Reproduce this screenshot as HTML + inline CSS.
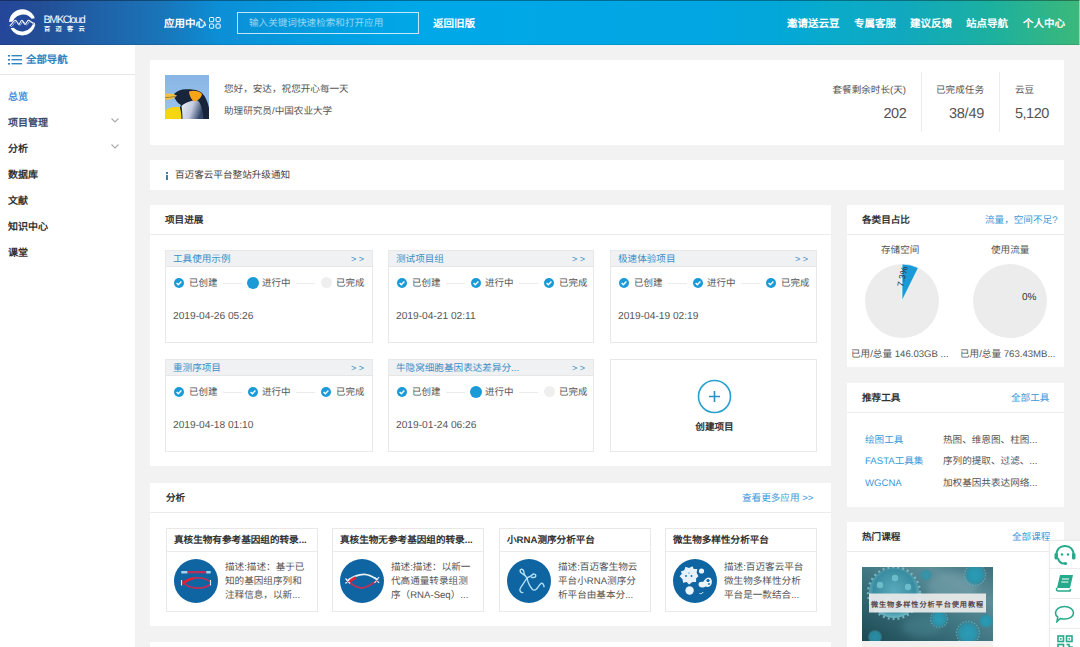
<!DOCTYPE html>
<html lang="zh-CN">
<head>
<meta charset="utf-8">
<style>
*{margin:0;padding:0;box-sizing:border-box}
html,body{width:1080px;height:647px;overflow:hidden;background:#f2f2f2;font-family:"Liberation Sans",sans-serif;color:#333;text-rendering:geometricPrecision}
.a{position:absolute}
div.a{padding-top:1px}
#hdr{left:0;top:0;width:1080px;height:45px;background:linear-gradient(90deg,#25469a 0%,#234e95 3.7%,#1f62a8 9.3%,#1a74b8 14.8%,#0c8fd6 20.4%,#02a0e2 31.5%,#00a8e8 39%,#02a6e2 65%,#03a7d8 72%,#0aabc8 78%,#10a8c0 83.3%,#1cb0a0 91.7%,#3cb87a 100%)}
#hdr .topline{left:0;top:0;width:1080px;height:1px;background:rgba(0,0,0,.35)}
.hn{color:#fff;font-weight:bold;font-size:10.5px;top:17px;line-height:13px;white-space:nowrap}
#side{left:0;top:45px;width:135px;height:602px;background:#fff}
.si{left:8px;font-size:10px;font-weight:bold;line-height:12px;color:#333;white-space:nowrap}
.card{background:#fff}
.t11{font-size:9.6px;line-height:12px;white-space:nowrap}
.pc{background:#fff;border:1px solid #e8e8e8}
.pch{left:0;top:0;height:16px;background:#f0f1f3;border-bottom:1px solid #e6e6e6}
.pct{left:7px;top:2px;font-size:9.6px;line-height:12px;color:#3a8fc8;white-space:nowrap}
.pcm{top:1px;font-size:9px;line-height:12px;color:#3a8fc8;white-space:nowrap}
.pst{top:25.5px;font-size:9.5px;line-height:12px;color:#555;white-space:nowrap}
.pln{top:31.5px;width:19px;height:1px;background:#ebebeb}
.pdt{left:7px;top:59px;font-size:10.2px;line-height:12px;color:#555;white-space:nowrap}
.ac{background:#fff;border:1px solid #e8e8e8;width:152px;height:84px}
.act{left:7px;top:5px;font-size:9.6px;font-weight:bold;line-height:12px;color:#333;white-space:nowrap}
.ach{left:0;top:22px;width:150px;height:1px;background:#ececec}
.aci{left:8px;top:30px;width:45px;height:45px;border-radius:50%;background:#0d5f93}
.acd{left:58px;font-size:9.6px;line-height:14px;color:#555;white-space:nowrap}
</style>
</head>
<body>
<div id="hdr" class="a">
  <div class="a topline"></div>
  <div class="a" style="left:0;top:44px;width:1080px;height:1px;background:rgba(0,0,0,.1)"></div>
  <div class="a" style="left:1079px;top:0;width:1px;height:45px;background:rgba(255,255,255,.45)"></div>
  <svg class="a" style="left:6px;top:6px" width="34" height="34" viewBox="0 0 34 34">
    <circle cx="16.3" cy="16.3" r="13.1" fill="#fff"/>
    <ellipse cx="16.6" cy="17" rx="10.2" ry="8.4" transform="rotate(-10 16.6 17)" fill="#24489b"/>
    <path d="M0 16.5 L34 11.5 L34 17.2 L0 23 Z" fill="#24489b"/>
    <path d="M3.8 20 C6 18 7.5 14.5 9.5 14.2 C11 14 11.5 18.4 12.8 18.4 C14 18.4 14.5 14.2 15.8 14.2 C17 14.2 17.8 18.4 19 18.4 C20.5 18.4 21 14.2 22.6 14.2 C24 14.2 25 17.5 29 17.5" fill="none" stroke="#fff" stroke-width="1.1"/>
    <path d="M5 21 C7 19.5 8.5 16 10.5 15.5 C12 15.5 12.5 19.5 14 19.2 C15.5 19 16 15.2 17.2 15.2 C18.5 15.2 19 19.2 20.5 19 C22 18.8 22.5 15.2 24 15.5 C25.5 16 26 18.2 28 18.5" fill="none" stroke="#cfe0f5" stroke-width="0.7"/>
  </svg>
  <div class="a" style="left:43.5px;top:14px;color:#f4f8ff;font-size:10.8px;letter-spacing:-1.35px;line-height:11px">BMKCloud</div>
  <div class="a" style="left:44px;top:25px;color:#fff;font-size:6.2px;font-weight:bold;letter-spacing:5.3px;line-height:7px">百迈客云</div>
  <div class="a hn" style="left:164px">应用中心</div>
  <svg class="a" style="left:209px;top:16.5px" width="12" height="12" viewBox="0 0 12 12"><g fill="none" stroke="#fff" stroke-width="1"><rect x="0.5" y="0.5" width="4.2" height="4.2" rx="0.8"/><rect x="7" y="0.5" width="4.2" height="4.2" rx="0.8"/><rect x="0.5" y="7" width="4.2" height="4.2" rx="0.8"/><rect x="7" y="7" width="4.2" height="4.2" rx="0.8"/></g></svg>
  <div class="a" style="left:237px;top:12px;width:182px;height:22px;border:1px solid rgba(255,255,255,.75)"></div>
  <div class="a" style="left:249px;top:16px;font-size:9.6px;line-height:13px;color:rgba(255,255,255,.6);white-space:nowrap">输入关键词快速检索和打开应用</div>
  <div class="a hn" style="left:433px">返回旧版</div>
  <div class="a hn" style="left:787px">邀请送云豆</div>
  <div class="a hn" style="left:854px">专属客服</div>
  <div class="a hn" style="left:910px">建议反馈</div>
  <div class="a hn" style="left:966px">站点导航</div>
  <div class="a hn" style="left:1023px">个人中心</div>
</div>

<div id="side" class="a">
  <svg class="a" style="left:8px;top:10px" width="14" height="10" viewBox="0 0 14 10"><g fill="#2f86c4"><rect x="0" y="0" width="2" height="1.6"/><rect x="0" y="4" width="2" height="1.6"/><rect x="0" y="8" width="2" height="1.6"/><rect x="3.5" y="0" width="10.5" height="1.4"/><rect x="3.5" y="4" width="10.5" height="1.4"/><rect x="3.5" y="8" width="10.5" height="1.4"/></g></svg>
  <div class="a" style="left:26px;top:9px;font-size:10.4px;font-weight:bold;color:#2f86c4;line-height:12px">全部导航</div>
  <div class="a" style="left:0;top:29px;width:135px;height:1px;background:#e6e6e6"></div>
  <div class="a si" style="top:46px;color:#4a8ee0">总览</div>
  <div class="a si" style="top:72px;color:#3d4d6e">项目管理</div>
  <div class="a si" style="top:97.5px">分析</div>
  <div class="a si" style="top:123.5px">数据库</div>
  <div class="a si" style="top:149.5px">文献</div>
  <div class="a si" style="top:175.5px">知识中心</div>
  <div class="a si" style="top:201.5px">课堂</div>
  <svg class="a" style="left:111px;top:73px" width="8" height="5" viewBox="0 0 8 5"><path d="M0.5 0.5 L4 4 L7.5 0.5" fill="none" stroke="#aaa" stroke-width="1.1"/></svg>
  <svg class="a" style="left:111px;top:99px" width="8" height="5" viewBox="0 0 8 5"><path d="M0.5 0.5 L4 4 L7.5 0.5" fill="none" stroke="#aaa" stroke-width="1.1"/></svg>
</div>

<!-- user card -->
<div class="a card" style="left:150px;top:60px;width:914px;height:85px">
  <svg class="a" style="left:15px;top:15px" width="44" height="44" viewBox="0 0 44 44">
    <defs><linearGradient id="sky" x1="0" y1="0" x2="0" y2="1"><stop offset="0" stop-color="#88b5e4"/><stop offset="1" stop-color="#9ec6ee"/></linearGradient>
    <linearGradient id="bdy" x1="0" y1="0" x2="1" y2="0.3"><stop offset="0" stop-color="#eef0f6"/><stop offset="0.55" stop-color="#c4cbe0"/><stop offset="1" stop-color="#34486a"/></linearGradient></defs>
    <rect width="44" height="44" fill="url(#sky)"/>
    <path d="M9 19 C12 16 16 14.2 21 14.2 C27 14 33 14.5 37 18 C41 22 43 28 44 33 L44 44 L14 44 C14 38 14 33 16 30 C12 28 10 24 9 21 Z" fill="#17243a"/>
    <path d="M16.5 31 C20 27.5 26 25.5 32 25 C35.5 27 37.5 33 38.5 44 L17.5 44 C17.5 39 17 35 16.5 31Z" fill="url(#bdy)"/>
    <path d="M24 16.5 C28 15 34 15.5 37 19 C36.5 23 33 25.5 28.5 26.5 C26 23.5 24 20 24 16.5Z" fill="#f5a41a"/>
    <path d="M0 18.8 C4 18 9 18.5 12 20.5 C10 23 6 24.8 2 24.8 L0 24.8Z" fill="#f1c23e"/>
    <path d="M0 22.5 C4 22.5 8 22 11.5 21" fill="none" stroke="#6a5a30" stroke-width="0.6"/>
    <path d="M0 44 L0 35.5 C3 32.5 9 31.5 14.5 32 C16 35 16.5 40 16.5 44Z" fill="#f6d60f"/>
  </svg>
  <div class="a" style="left:74px;top:23px;font-size:9.6px;line-height:12px;color:#555;white-space:nowrap">您好，安达，祝您开心每一天</div>
  <div class="a" style="left:74px;top:45px;font-size:9.6px;line-height:12px;color:#555;white-space:nowrap">助理研究员/中国农业大学</div>
  <div class="a" style="right:158px;top:24px;text-align:right;font-size:9.6px;line-height:12px;color:#555;white-space:nowrap">套餐剩余时长(天)</div>
  <div class="a" style="right:158px;top:45px;text-align:right;font-size:14.5px;line-height:17px;color:#555;letter-spacing:-0.4px;margin-right:-0.4px">202</div>
  <div class="a" style="left:771px;top:12px;width:1px;height:60px;background:#ececec"></div>
  <div class="a" style="right:80px;top:24px;text-align:right;font-size:9.6px;line-height:12px;color:#555;white-space:nowrap">已完成任务</div>
  <div class="a" style="right:80px;top:45px;text-align:right;font-size:14.5px;line-height:17px;color:#555;letter-spacing:-0.2px;margin-right:-0.2px">38/49</div>
  <div class="a" style="left:849px;top:12px;width:1px;height:60px;background:#ececec"></div>
  <div class="a" style="left:865px;top:24px;font-size:9.6px;line-height:12px;color:#555;white-space:nowrap">云豆</div>
  <div class="a" style="left:865px;top:45px;font-size:14.5px;line-height:17px;color:#555;letter-spacing:-0.5px">5,120</div>
</div>
<!-- notice -->
<div class="a card" style="left:150px;top:160px;width:914px;height:30px">
  <div class="a" style="left:15.5px;top:11.5px;width:2px;height:2px;background:#3a80a8"></div>
  <div class="a" style="left:15.5px;top:14.5px;width:2px;height:5px;background:#3a80a8"></div>
  <div class="a" style="left:25px;top:9px;font-size:9.6px;line-height:12px;color:#444;white-space:nowrap">百迈客云平台整站升级通知</div>
</div>
<!-- project section -->
<div class="a card" style="left:150px;top:205px;width:681px;height:261px">
  <div class="a" style="left:15px;top:9px;font-size:9.6px;font-weight:bold;line-height:12px;color:#333">项目进展</div>
  <div class="a" style="left:0;top:29px;width:681px;height:1px;background:#ececec"></div>
</div>
<!-- analysis section -->
<div class="a card" style="left:150px;top:483px;width:681px;height:143px">
  <div class="a" style="left:16px;top:9px;font-size:9.6px;font-weight:bold;line-height:12px;color:#333">分析</div>
  <div class="a" style="left:592px;top:8px;font-size:9.6px;line-height:13px;color:#3a9ad9;white-space:nowrap">查看更多应用 &gt;&gt;</div>
  <div class="a" style="left:0;top:29px;width:681px;height:1px;background:#ececec"></div>
</div>
<div class="a card" style="left:150px;top:642px;width:681px;height:10px"></div>
<!-- project cards -->
<div class="a pc" style="left:165px;top:250px;width:208px;height:93px"><div class="a pch" style="width:206px"></div><div class="a pct">工具使用示例</div><div class="a pcm" style="left:185px">&gt; &gt;</div><svg class="a" style="left:7.5px;top:26.5px" width="10" height="10" viewBox="0 0 10 10"><circle cx="5" cy="5" r="5" fill="#1a9ad6"/><path d="M2.6 5.1 L4.3 6.7 L7.4 3.5" fill="none" stroke="#fff" stroke-width="1.4"/></svg><div class="a pst" style="left:23px">已创建</div><div class="a pln" style="left:57px"></div><div class="a" style="left:80.5px;top:25.5px;width:12px;height:12px;border-radius:50%;background:#1a9ad6"></div><div class="a pst" style="left:96px">进行中</div><div class="a pln" style="left:130px"></div><div class="a" style="left:154.5px;top:26px;width:11px;height:11px;border-radius:50%;background:#efefef"></div><div class="a pst" style="left:170px">已完成</div><div class="a pdt">2019-04-26 05:26</div></div>
<div class="a pc" style="left:388px;top:250px;width:206px;height:93px"><div class="a pch" style="width:204px"></div><div class="a pct">测试项目组</div><div class="a pcm" style="left:183px">&gt; &gt;</div><svg class="a" style="left:7.5px;top:26.5px" width="10" height="10" viewBox="0 0 10 10"><circle cx="5" cy="5" r="5" fill="#1a9ad6"/><path d="M2.6 5.1 L4.3 6.7 L7.4 3.5" fill="none" stroke="#fff" stroke-width="1.4"/></svg><div class="a pst" style="left:23px">已创建</div><div class="a pln" style="left:57px"></div><svg class="a" style="left:81.5px;top:26.5px" width="10" height="10" viewBox="0 0 10 10"><circle cx="5" cy="5" r="5" fill="#1a9ad6"/><path d="M2.6 5.1 L4.3 6.7 L7.4 3.5" fill="none" stroke="#fff" stroke-width="1.4"/></svg><div class="a pst" style="left:96px">进行中</div><div class="a pln" style="left:130px"></div><svg class="a" style="left:155px;top:26.5px" width="10" height="10" viewBox="0 0 10 10"><circle cx="5" cy="5" r="5" fill="#1a9ad6"/><path d="M2.6 5.1 L4.3 6.7 L7.4 3.5" fill="none" stroke="#fff" stroke-width="1.4"/></svg><div class="a pst" style="left:170px">已完成</div><div class="a pdt">2019-04-21 02:11</div></div>
<div class="a pc" style="left:610px;top:250px;width:207px;height:93px"><div class="a pch" style="width:205px"></div><div class="a pct">极速体验项目</div><div class="a pcm" style="left:184px">&gt; &gt;</div><svg class="a" style="left:7.5px;top:26.5px" width="10" height="10" viewBox="0 0 10 10"><circle cx="5" cy="5" r="5" fill="#1a9ad6"/><path d="M2.6 5.1 L4.3 6.7 L7.4 3.5" fill="none" stroke="#fff" stroke-width="1.4"/></svg><div class="a pst" style="left:23px">已创建</div><div class="a pln" style="left:57px"></div><svg class="a" style="left:81.5px;top:26.5px" width="10" height="10" viewBox="0 0 10 10"><circle cx="5" cy="5" r="5" fill="#1a9ad6"/><path d="M2.6 5.1 L4.3 6.7 L7.4 3.5" fill="none" stroke="#fff" stroke-width="1.4"/></svg><div class="a pst" style="left:96px">进行中</div><div class="a pln" style="left:130px"></div><svg class="a" style="left:155px;top:26.5px" width="10" height="10" viewBox="0 0 10 10"><circle cx="5" cy="5" r="5" fill="#1a9ad6"/><path d="M2.6 5.1 L4.3 6.7 L7.4 3.5" fill="none" stroke="#fff" stroke-width="1.4"/></svg><div class="a pst" style="left:170px">已完成</div><div class="a pdt">2019-04-19 02:19</div></div>
<div class="a pc" style="left:165px;top:359px;width:208px;height:93px"><div class="a pch" style="width:206px"></div><div class="a pct">重测序项目</div><div class="a pcm" style="left:185px">&gt; &gt;</div><svg class="a" style="left:7.5px;top:26.5px" width="10" height="10" viewBox="0 0 10 10"><circle cx="5" cy="5" r="5" fill="#1a9ad6"/><path d="M2.6 5.1 L4.3 6.7 L7.4 3.5" fill="none" stroke="#fff" stroke-width="1.4"/></svg><div class="a pst" style="left:23px">已创建</div><div class="a pln" style="left:57px"></div><svg class="a" style="left:81.5px;top:26.5px" width="10" height="10" viewBox="0 0 10 10"><circle cx="5" cy="5" r="5" fill="#1a9ad6"/><path d="M2.6 5.1 L4.3 6.7 L7.4 3.5" fill="none" stroke="#fff" stroke-width="1.4"/></svg><div class="a pst" style="left:96px">进行中</div><div class="a pln" style="left:130px"></div><svg class="a" style="left:155px;top:26.5px" width="10" height="10" viewBox="0 0 10 10"><circle cx="5" cy="5" r="5" fill="#1a9ad6"/><path d="M2.6 5.1 L4.3 6.7 L7.4 3.5" fill="none" stroke="#fff" stroke-width="1.4"/></svg><div class="a pst" style="left:170px">已完成</div><div class="a pdt">2019-04-18 01:10</div></div>
<div class="a pc" style="left:388px;top:359px;width:206px;height:93px"><div class="a pch" style="width:204px"></div><div class="a pct">牛隐窝细胞基因表达差异分...</div><div class="a pcm" style="left:183px">&gt; &gt;</div><svg class="a" style="left:7.5px;top:26.5px" width="10" height="10" viewBox="0 0 10 10"><circle cx="5" cy="5" r="5" fill="#1a9ad6"/><path d="M2.6 5.1 L4.3 6.7 L7.4 3.5" fill="none" stroke="#fff" stroke-width="1.4"/></svg><div class="a pst" style="left:23px">已创建</div><div class="a pln" style="left:57px"></div><div class="a" style="left:80.5px;top:25.5px;width:12px;height:12px;border-radius:50%;background:#1a9ad6"></div><div class="a pst" style="left:96px">进行中</div><div class="a pln" style="left:130px"></div><div class="a" style="left:154.5px;top:26px;width:11px;height:11px;border-radius:50%;background:#efefef"></div><div class="a pst" style="left:170px">已完成</div><div class="a pdt">2019-01-24 06:26</div></div>
<div class="a pc" style="left:610px;top:359px;width:207px;height:93px"><svg class="a" style="left:85.5px;top:19px" width="35" height="35" viewBox="0 0 35 35"><circle cx="17.5" cy="17.5" r="16" fill="none" stroke="#26a0cc" stroke-width="1.6"/><path d="M17.5 12 V23 M12 17.5 H23" stroke="#2a8fc2" stroke-width="1.6"/></svg><div class="a" style="left:0;top:61px;width:207px;text-align:center;font-size:9.6px;font-weight:bold;line-height:12px;color:#333">创建项目</div></div>
<div class="a ac" style="left:166px;top:528px"><div class="a act">真核生物有参考基因组的转录...</div><div class="a ach"></div><svg class="a" style="left:7px;top:30px" width="44" height="44" viewBox="0 0 44 44"><circle cx="22" cy="22" r="22" fill="#0f64a2"/><path d="M13 13.2 H32.5" stroke="#b3335c" stroke-width="2.4"/><path d="M7.3 13.2 H13.3 M32.3 13.2 H36.7" stroke="#9fd4ef" stroke-width="2.4"/><path d="M8 25.5 C13 17.5 29 17 36 22.5" fill="none" stroke="#b8305a" stroke-width="1.9"/><path d="M8 22 C14 30.5 29 31 36 25.5" fill="none" stroke="#b8305a" stroke-width="1.9"/><path d="M10 23.5 C13 21.5 16 20 19 19.5" fill="none" stroke="#e4202e" stroke-width="2.6"/><path d="M7.5 21 V26.5 M36.5 21 V26.5" stroke="#d9e8f3" stroke-width="1.1"/></svg><div class="a acd" style="top:31px">描述:描述：基于已</div><div class="a acd" style="top:45px">知的基因组序列和</div><div class="a acd" style="top:59px">注释信息，以新...</div></div>
<div class="a ac" style="left:332px;top:528px"><div class="a act">真核生物无参考基因组的转录...</div><div class="a ach"></div><svg class="a" style="left:7px;top:30px" width="44" height="44" viewBox="0 0 44 44"><circle cx="22" cy="22" r="22" fill="#0f64a2"/><path d="M7 22 C12 18 18 15.2 24.3 15.3 C30 15.5 34 18.5 37.9 21" fill="none" stroke="#e8f0f8" stroke-width="1.8"/><path d="M7 22 C12 25 16 29 21.7 29 C28 29 32 24.5 37.9 21" fill="none" stroke="#b8335a" stroke-width="1.8"/><path d="M9 22.5 L16 18.5" stroke="#e02436" stroke-width="2.8"/><path d="M5.5 19.5 L10 24.5 M5.5 24.5 L10 19.5 M34.5 18 L39 24 M34.5 24 L39 18" stroke="#e6f0f8" stroke-width="1.2"/></svg><div class="a acd" style="top:31px">描述:描述：以新一</div><div class="a acd" style="top:45px">代高通量转录组测</div><div class="a acd" style="top:59px">序（RNA-Seq）...</div></div>
<div class="a ac" style="left:499px;top:528px"><div class="a act">小RNA测序分析平台</div><div class="a ach"></div><svg class="a" style="left:7px;top:30px" width="44" height="44" viewBox="0 0 44 44"><circle cx="22" cy="22" r="22" fill="#0f64a2"/><g fill="none" stroke="#b0e0f6" stroke-width="1.4" stroke-linecap="round"><path d="M20 18.7 C18.5 17 16.5 15.5 15 14.5 C12.5 13 12.5 10.5 14.5 10.3 C16.5 10.2 17 12.5 17 14.5 L18.5 17"/><path d="M20 18.7 C22 18.2 23.5 17.5 25 16 C26.5 14.3 29 15 28.8 16.8 C28.6 18.5 26.5 18.8 24.5 18.3"/><path d="M20 18.7 C18.5 22 15 26 13.2 29.5 C12.3 31.5 13.5 33.5 15.8 33.6"/><path d="M20 18.7 C20.5 22 22.5 27 25.1 30 C26.5 31.5 28 31.5 29.5 30 C31 28.5 32 26 34 24.5 C35.5 23.8 37 25.5 37 27.7"/></g></svg><div class="a acd" style="top:31px">描述:百迈客生物云</div><div class="a acd" style="top:45px">平台小RNA测序分</div><div class="a acd" style="top:59px">析平台由基本分...</div></div>
<div class="a ac" style="left:665px;top:528px"><div class="a act">微生物多样性分析平台</div><div class="a ach"></div><svg class="a" style="left:7px;top:30px" width="44" height="44" viewBox="0 0 44 44"><circle cx="22" cy="22" r="22" fill="#0f64a2"/><path transform="translate(16 16) scale(1.18) translate(-16 -16)" d="M9 13 L12 12 L13 9 L16 10 L19 8.5 L20 11 L23 11 L22.5 14 L24 17 L22 19 L22 22 L19 22 L16 24 L14 22 L11 22.5 L10.5 19.5 L8 17 L10 15 Z" fill="#e6f1f9"/><circle cx="13" cy="17" r="0.9" fill="#0f64a2"/><circle cx="18.5" cy="17" r="0.9" fill="#0f64a2"/><circle cx="16" cy="14" r="0.6" fill="#0f64a2"/><circle cx="28.5" cy="12" r="2.6" fill="#eaf4fb"/><circle cx="16.6" cy="31.5" r="4.2" fill="#eaf4fb"/><path d="M25.5 25.5 C25.5 23 28 22.5 30 23 C31.5 21 33 18.5 35.5 18.5 C38.5 18.5 39.5 22 38.5 25 C37.5 28 34.5 28.5 32.5 27.5 C30.5 29 25.5 29 25.5 25.5Z" fill="#eaf4fb"/><circle cx="35" cy="21.5" r="1.6" fill="#0f64a2"/><circle cx="36" cy="25" r="0.9" fill="#0f64a2"/><path d="M26.5 34.5 C28 35 29.5 34.5 30 33" fill="none" stroke="#eaf4fb" stroke-width="1"/></svg><div class="a acd" style="top:31px">描述:百迈客云平台</div><div class="a acd" style="top:45px">微生物多样性分析</div><div class="a acd" style="top:59px">平台是一款结合...</div></div>
<!-- right panels -->
<div class="a card" style="left:847px;top:205px;width:217px;height:162px">
  <div class="a" style="left:15px;top:9px;font-size:9.6px;font-weight:bold;line-height:12px;color:#333">各类目占比</div>
  <div class="a" style="left:138px;top:8px;font-size:9.6px;line-height:13px;color:#3a9ad9;white-space:nowrap">流量，空间不足?</div>
  <div class="a" style="left:0;top:29px;width:217px;height:1px;background:#ececec"></div>
  <div class="a" style="left:34px;top:39px;font-size:9.6px;line-height:12px;color:#555;white-space:nowrap">存储空间</div>
  <div class="a" style="left:144px;top:39px;font-size:9.6px;line-height:12px;color:#555;white-space:nowrap">使用流量</div>
  <svg class="a" style="left:17px;top:58px" width="76" height="76" viewBox="0 0 76 76">
    <circle cx="38" cy="38" r="37" fill="#ececec"/>
    <path d="M38 38 L38 1 A37 37 0 0 1 54.4 4.8 Z" fill="#1a9ad6" stroke="#fff" stroke-width="0.7"/>
  </svg>
  <svg class="a" style="left:125px;top:58px" width="76" height="76" viewBox="0 0 76 76">
    <circle cx="38" cy="38" r="37" fill="#ececec"/>
  </svg>
  <div class="a" style="left:42.5px;top:65.5px;width:24px;text-align:center;font-size:9px;line-height:10px;color:#333;transform:rotate(-78deg);white-space:nowrap">7.3%</div>
  <div class="a" style="left:175px;top:86px;font-size:10px;line-height:12px;color:#333">0%</div>
  <div class="a" style="left:4px;top:143px;font-size:9.6px;line-height:12px;color:#555;white-space:nowrap">已用/总量 146.03GB ...</div>
  <div class="a" style="left:113px;top:143px;font-size:9.6px;line-height:12px;color:#555;white-space:nowrap">已用/总量 763.43MB...</div>
</div>
<div class="a card" style="left:847px;top:383px;width:217px;height:124px">
  <div class="a" style="left:15px;top:9px;font-size:9.6px;font-weight:bold;line-height:12px;color:#333">推荐工具</div>
  <div class="a" style="left:164px;top:8px;font-size:9.6px;line-height:13px;color:#3a9ad9;white-space:nowrap">全部工具</div>
  <div class="a" style="left:0;top:29px;width:217px;height:1px;background:#ececec"></div>
  <div class="a" style="left:18px;top:50px;font-size:9.6px;line-height:13px;color:#3a9ad9;white-space:nowrap">绘图工具</div>
  <div class="a" style="left:18px;top:71px;font-size:9.6px;line-height:13px;color:#3a9ad9;white-space:nowrap">FASTA工具集</div>
  <div class="a" style="left:18px;top:93px;font-size:9.6px;line-height:13px;color:#3a9ad9;white-space:nowrap">WGCNA</div>
  <div class="a" style="left:96px;top:50px;font-size:9.6px;line-height:13px;color:#555;white-space:nowrap">热图、维恩图、柱图...</div>
  <div class="a" style="left:96px;top:71px;font-size:9.6px;line-height:13px;color:#555;white-space:nowrap">序列的提取、过滤、...</div>
  <div class="a" style="left:96px;top:93px;font-size:9.6px;line-height:13px;color:#555;white-space:nowrap">加权基因共表达网络...</div>
</div>
<div class="a card" style="left:847px;top:522px;width:217px;height:130px">
  <div class="a" style="left:15px;top:9px;font-size:9.6px;font-weight:bold;line-height:12px;color:#333">热门课程</div>
  <div class="a" style="left:165px;top:8px;font-size:9.6px;line-height:13px;color:#3a9ad9;white-space:nowrap">全部课程</div>
  <div class="a" style="left:0;top:29px;width:217px;height:1px;background:#ececec"></div>
</div>
<!-- course image -->
<svg class="a" style="left:862px;top:567px" width="131" height="74" viewBox="0 0 131 74">
<defs><linearGradient id="cbg" x1="0" y1="1" x2="1" y2="0"><stop offset="0" stop-color="#1c4852"/><stop offset="0.45" stop-color="#3d7480"/><stop offset="0.75" stop-color="#5d8e99"/><stop offset="1" stop-color="#3f6f7c"/></linearGradient>
<radialGradient id="vb" cx="0.5" cy="0.45" r="0.55"><stop offset="0" stop-color="#58aabb"/><stop offset="0.75" stop-color="#3a8ca0"/><stop offset="1" stop-color="#6cb8c6"/></radialGradient>
<radialGradient id="vs" cx="0.5" cy="0.5" r="0.5"><stop offset="0" stop-color="#2a9cb6"/><stop offset="0.75" stop-color="#2b93ab"/><stop offset="1" stop-color="#3a8a9a" stop-opacity="0.5"/></radialGradient>
<filter id="bl" x="-0.5" y="-0.5" width="2" height="2"><feGaussianBlur stdDeviation="3"/></filter></defs>
<rect width="131" height="74" fill="url(#cbg)"/>
<ellipse cx="90" cy="20" rx="25" ry="14" fill="#7aa3ad" opacity="0.5" filter="url(#bl)"/>
<ellipse cx="60" cy="60" rx="20" ry="10" fill="#4a8490" opacity="0.5" filter="url(#bl)"/>
<circle cx="32" cy="26" r="25" fill="url(#vb)"/>
<circle cx="32" cy="26" r="26" fill="none" stroke="#86c8d4" stroke-width="2.2" stroke-dasharray="2 3" opacity="0.8"/>
<circle cx="18" cy="18" r="3.2" fill="#6cbccb"/><circle cx="33" cy="11" r="3.2" fill="#6cbccb"/><circle cx="46" cy="20" r="3.2" fill="#6cbccb"/><circle cx="26" cy="33" r="3" fill="#6cbccb"/><circle cx="42" cy="35" r="3" fill="#6cbccb"/>
<circle cx="113" cy="8" r="10" fill="url(#vs)"/><circle cx="113" cy="8" r="10.5" fill="none" stroke="#5ab4c6" stroke-width="1.5" stroke-dasharray="1.5 1.5" opacity="0.7"/>
<circle cx="64" cy="8" r="6" fill="url(#vs)" opacity="0.7"/>
<circle cx="77" cy="52" r="8" fill="url(#vs)"/><circle cx="77" cy="52" r="8.5" fill="none" stroke="#5ab4c6" stroke-width="1.4" stroke-dasharray="1.5 1.5" opacity="0.7"/>
<circle cx="106" cy="66" r="11" fill="url(#vs)"/><circle cx="106" cy="66" r="11.5" fill="none" stroke="#5ab4c6" stroke-width="1.5" stroke-dasharray="1.5 1.5" opacity="0.7"/>
<circle cx="124" cy="54" r="7" fill="url(#vs)"/>
<circle cx="13" cy="70" r="7" fill="url(#vs)" opacity="0.8"/>
<rect x="7" y="26.5" width="117" height="19" fill="#ebebeb" opacity="0.92"/>
<text x="65.5" y="39.5" text-anchor="middle" font-family="Liberation Sans, sans-serif" font-size="7.2" font-weight="bold" fill="#58484c" letter-spacing="0.9">微生物多样性分析平台使用教程</text>
</svg>
<div class="a" style="left:862px;top:641px;width:131px;height:6px;background:#f3f1f0"></div>
<!-- float toolbar -->
<div class="a" style="left:1049px;top:540px;width:40px;height:120px;background:#fff;border:1px solid #ebebeb;box-shadow:0 0 3px rgba(0,0,0,.04)"></div>
<div class="a" style="left:1050px;top:568px;width:30px;height:1px;background:#ececec"></div>
<div class="a" style="left:1050px;top:598px;width:30px;height:1px;background:#ececec"></div>
<div class="a" style="left:1050px;top:628px;width:30px;height:1px;background:#ececec"></div>
<svg class="a" style="left:1052.5px;top:544px" width="24" height="22" viewBox="0 0 24 22"><g fill="none" stroke="#27a98b" stroke-width="2"><path d="M3.5 12 C3 5 7 2 12 2 C17 2 21 5 20.5 12"/><path d="M5 14 C6 18.5 9 20 12.5 19.5"/></g>
<rect x="1.5" y="9" width="3.5" height="6.5" rx="1.5" fill="#27a98b"/><rect x="19" y="9" width="3.5" height="6.5" rx="1.5" fill="#27a98b"/><circle cx="12.5" cy="19.5" r="1.6" fill="#27a98b"/><circle cx="9" cy="10.5" r="1.2" fill="#27a98b"/><circle cx="15" cy="10.5" r="1.2" fill="#27a98b"/></svg>
<svg class="a" style="left:1055px;top:573.5px" width="20" height="18" viewBox="0 0 20 18"><path d="M5 1 H18 L15 14 H2 Z" fill="#27a98b"/><path d="M2 14 C1 15 1.5 17 3 17 H15 L15.5 15" fill="none" stroke="#27a98b" stroke-width="1.6"/><path d="M7 5 H14 M6.3 8 H13.3" stroke="#fff" stroke-width="1.2"/></svg>
<svg class="a" style="left:1054px;top:605px" width="21" height="18" viewBox="0 0 21 18"><path d="M10.5 1.5 C15.5 1.5 19.5 4.5 19.5 8 C19.5 11.5 15.5 14 10.5 14 C9 14 7.5 13.8 6.5 13.4 L3 16.5 L3.8 12.2 C2.3 11 1.5 9.6 1.5 8 C1.5 4.5 5.5 1.5 10.5 1.5Z" fill="none" stroke="#27a98b" stroke-width="1.6"/></svg>
<svg class="a" style="left:1057px;top:635px" width="16" height="16" viewBox="0 0 16 16"><g fill="none" stroke="#27a98b" stroke-width="1.6"><rect x="1" y="1" width="5.5" height="5.5"/><rect x="9.5" y="1" width="5.5" height="5.5"/><rect x="1" y="9.5" width="5.5" height="5.5"/></g><rect x="3" y="3" width="1.6" height="1.6" fill="#27a98b"/><rect x="11.5" y="3" width="1.6" height="1.6" fill="#27a98b"/><path d="M9.5 9.5 H12 V12 H15 V15 H12" fill="none" stroke="#27a98b" stroke-width="1.6"/></svg>
</body>
</html>
